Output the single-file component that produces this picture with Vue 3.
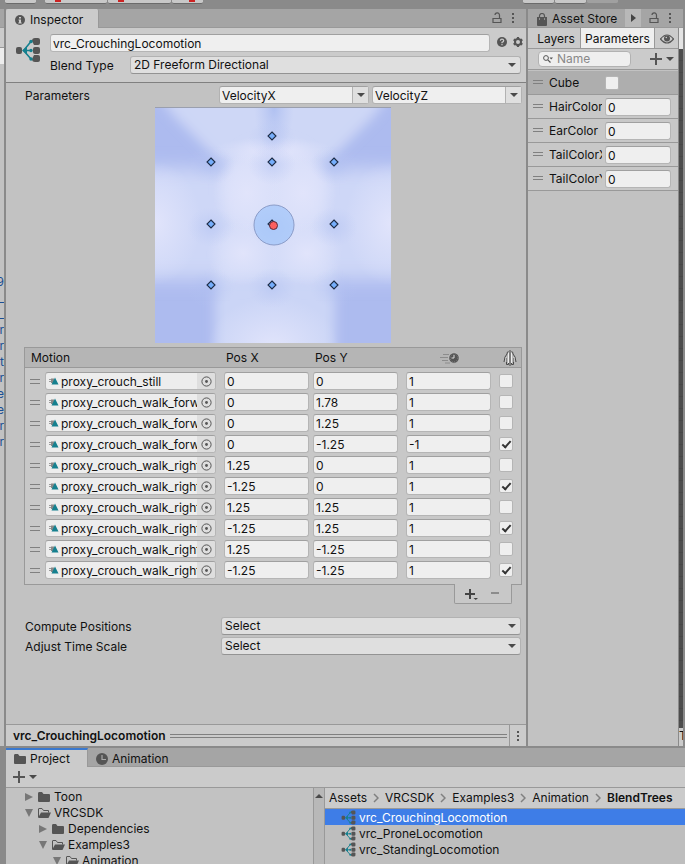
<template>
    <div class="editor">
        <svg class="defs" width="0" height="0" aria-hidden="true">
            <symbol id="blend-tree" viewBox="0 0 26 26">
                <rect x="1" y="10" width="6" height="7" rx="2" fill="#555" />
                <path d="M17 4Q17 1 20 1H23Q25 1 25 3V6Q25 8 23 8H19Z" fill="#555" />
                <rect x="18" y="10" width="7" height="7" rx="2" fill="#555" />
                <path d="M17 22Q17 25 20 25H23Q25 25 25 23V20Q25 18 23 18H19Z" fill="#555" />
                <path d="M8 13.500H17M9 13L16 4.500M9 14L16 22" stroke="#15808f" stroke-width="1.600" fill="none" />
                <path d="M7 13.500L12 9.500V17.500Z" fill="#15808f" />
                <circle cx="16" cy="4.500" r="1.700" fill="#15808f" />
                <circle cx="16" cy="13.500" r="1.700" fill="#15808f" />
                <circle cx="16" cy="22" r="1.700" fill="#15808f" />
            </symbol>
            <symbol id="lock" viewBox="0 0 10 12">
                <path d="M1 6.500H9V10.500H1Z M7.500 6V3.200A2 2 0 0 0 3 3" fill="none" stroke="#555" stroke-width="1.200" />
            </symbol>
            <symbol id="dots" viewBox="0 0 4 12">
                <path d="M1 1h2v2h-2zM1 5h2v2h-2zM1 9h2v2h-2z" fill="#555" />
            </symbol>
            <symbol id="folder" viewBox="0 0 14 12">
                <path d="M1 2.500Q1 1 2 1H5L6.500 3H12Q13 3 13 4V10Q13 11 12 11H2Q1 11 1 10Z" fill="#555" />
            </symbol>
            <symbol id="folder-open" viewBox="0 0 14 12">
                <path d="M1.500 10V2Q1.500 1.500 2 1.500H5L6.500 3.500H11.500V5.500" fill="none" stroke="#555" />
                <path d="M4 5.500H14L11.500 11H1Z" fill="#555" />
            </symbol>
        </svg>

        <div class="toolbar">
            <button v-for="b in toolButtons" :key="b.id" type="button" :class="['tool', b.id]" :aria-label="b.id">
                <i v-if="b.red"></i>
            </button>
        </div>

        <div class="upper">
            <aside class="edge-left">
                <div class="edge-tab"></div>
                <div class="edge-box"></div>
                <div class="edge-field"></div>
                <ul>
                    <li v-for="(t, i) in hierarchyTails" :key="i">{{ t }}</li>
                </ul>
            </aside>

            <section class="inspector">
                <div class="tabbar">
                    <button type="button" class="tab active inspector-tab">
                        <svg width="10" height="10" viewBox="0 0 10 10">
                            <circle cx="5" cy="5" r="5" fill="#555" />
                            <path d="M4 2h2v1.500h-2zM3.500 4.500h2.500v3h.7v1h-3.400v-1h.7v-2h-.5z" fill="#ccc" />
                        </svg>
                        Inspector
                    </button>
                    <span class="spacer"></span>
                    <button type="button" class="icon-btn" aria-label="Lock"><svg width="10" height="12"><use href="#lock" /></svg></button>
                    <button type="button" class="icon-btn menu" aria-label="Menu"><svg width="4" height="12"><use href="#dots" /></svg></button>
                </div>

                <header class="asset-header">
                    <svg class="asset-icon" width="26" height="26"><use href="#blend-tree" /></svg>
                    <div class="asset-fields">
                        <div class="name-row">
                            <input v-model="assetName" class="field" type="text" aria-label="Name">
                            <button type="button" class="icon-btn" aria-label="Help">
                                <svg width="10" height="10" viewBox="0 0 10 10">
                                    <circle cx="5" cy="5" r="5" fill="#555" />
                                    <path d="M3.300 3.800Q3.500 2.200 5 2.200T6.700 3.700Q6.700 4.500 5 5.400V6.200M5 7V8.200" fill="none" stroke="#ccc" stroke-width="1.200" />
                                </svg>
                            </button>
                            <button type="button" class="icon-btn" aria-label="Settings">
                                <svg width="10" height="10" viewBox="0 0 10 10">
                                    <circle cx="5" cy="5" r="3" fill="none" stroke="#555" stroke-width="2" />
                                    <path d="M5 0V2M5 8V10M.7 2.500L2.400 3.500M7.600 6.500L9.300 7.500M.7 7.500L2.400 6.500M7.600 3.500L9.300 2.500" stroke="#555" stroke-width="2.200" />
                                </svg>
                            </button>
                        </div>
                        <div class="type-row">
                            <label for="blend-type">Blend Type</label>
                            <div class="dropdown">
                                <select id="blend-type"><option>2D Freeform Directional</option></select>
                                <span class="caret"></span>
                            </div>
                        </div>
                    </div>
                </header>

                <div class="inspector-body">
                    <div class="param-row">
                        <label for="param-x">Parameters</label>
                        <div v-for="p in axes" :key="p.id" class="combo">
                            <input :id="p.id" v-model="p.value" type="text" :aria-label="p.value">
                            <button type="button" aria-label="Choose parameter"><span class="caret"></span></button>
                        </div>
                    </div>

                    <svg class="blend-graph" width="236" height="236" viewBox="0 0 236 236">
                        <defs>
                            <filter id="wide" x="-40%" y="-40%" width="180%" height="180%"><feGaussianBlur stdDeviation="9" /></filter>
                            <filter id="edge" x="-30%" y="-30%" width="160%" height="160%"><feGaussianBlur stdDeviation="6" /></filter>
                            <radialGradient id="dip">
                                <stop offset="0" stop-color="#aabcf0" stop-opacity=".85" />
                                <stop offset="1" stop-color="#b8c6f3" stop-opacity="0" />
                            </radialGradient>
                            <radialGradient id="glow">
                                <stop offset="0" stop-color="#e1e4fb" />
                                <stop offset="1" stop-color="#dfe3fb" stop-opacity="0" />
                            </radialGradient>
                        </defs>
                        <rect width="236" height="236" fill="#adbbef" />
                        <g filter="url(#edge)">
                            <path d="M-4 -20L20 10L70 60H168L218 10L240 -20Z" fill="#ced7f6" />
                            <path d="M60 120H180V266H60Z" fill="#cbd5f6" />
                        </g>
                        <g filter="url(#wide)">
                            <path d="M-40 60L90 62V172L-40 172Z" fill="#ced7f7" />
                            <path d="M276 60L146 62V172L276 172Z" fill="#ced7f7" />
                        </g>
                        <g filter="url(#edge)">
                            <path d="M70 62H168L174 170H64Z" fill="#d3dbf8" />
                            <ellipse cx="119" cy="82" rx="52" ry="48" fill="#d9dff9" />
                        </g>
                        <ellipse cx="0" cy="116" rx="46" ry="62" fill="url(#glow)" />
                        <ellipse cx="236" cy="116" rx="46" ry="62" fill="url(#glow)" />
                        <ellipse cx="118" cy="240" rx="66" ry="50" fill="url(#glow)" />
                        <ellipse cx="118" cy="44" rx="62" ry="14" fill="url(#glow)" />
                        <ellipse cx="92" cy="86" rx="34" ry="40" fill="url(#glow)" />
                        <ellipse cx="148" cy="86" rx="34" ry="40" fill="url(#glow)" />
                        <ellipse cx="88" cy="146" rx="36" ry="32" fill="url(#glow)" />
                        <ellipse cx="152" cy="146" rx="36" ry="32" fill="url(#glow)" />
                        <ellipse cx="119" cy="0" rx="20" ry="46" fill="url(#dip)" />
                        <ellipse v-for="m in points" :key="'d' + m.x + m.y" :cx="m.x" :cy="m.y + 3" rx="24" ry="20" fill="url(#dip)" opacity=".5" />
                        <circle cx="119" cy="118" r="20" fill="#a3c5f9" fill-opacity=".75" stroke="#8b9cc8" />
                        <path
                            v-for="m in points"
                            :key="'p' + m.x + m.y"
                            :d="`M${m.x} ${m.y - 4}l4 4l-4 4l-4 -4z`"
                            fill="#76aefb" stroke="#1d2b45" stroke-width="1.100"
                        />
                        <circle cx="118.500" cy="118.500" r="4" fill="#fb6060" stroke="#5b2a3a" />
                        <path d="M0 .5H236" stroke="#9a9fae" />
                    </svg>

                    <table class="motions">
                        <colgroup>
                            <col class="c-handle"><col class="c-motion"><col class="c-pos"><col class="c-posy"><col class="c-time"><col class="c-mirror">
                        </colgroup>
                        <thead>
                            <tr>
                                <th colspan="2">Motion</th>
                                <th>Pos X</th>
                                <th>Pos Y</th>
                                <th class="center">
                                    <svg width="20" height="12" viewBox="0 0 20 12" aria-label="Time scale">
                                        <path d="M3 2.500H9M0 5.500H8M2 8.500H8M5 11H10" stroke="#8c8c8c" />
                                        <circle cx="14" cy="6" r="5.200" fill="#555" stroke="#ccc" stroke-width=".6" />
                                        <circle cx="14" cy="6" r="3.800" fill="none" stroke="#888" stroke-width=".8" stroke-dasharray="1 1.400" />
                                        <path d="M14 3V6H11.500" stroke="#ddd" fill="none" />
                                    </svg>
                                </th>
                                <th class="center">
                                    <svg width="14" height="16" viewBox="0 0 14 16" aria-label="Mirror">
                                        <path d="M5.500 1.500Q4 1.500 4 4L2 7L1 12M3.500 8V14.500H5.500V9" fill="none" stroke="#4a4a4a" />
                                        <path d="M8.500 1.500Q10 1.500 10 4L12 7L13 12M10.500 8V14.500H8.500V9" fill="none" stroke="#4a4a4a" />
                                        <path d="M5.500 3V13M8.500 3V13" stroke="#eee" />
                                        <path d="M3 7V12M11 7V12" stroke="#ddd" stroke-width=".8" />
                                        <path d="M7 0V16" stroke="#4a4a4a" />
                                    </svg>
                                </th>
                            </tr>
                        </thead>
                        <tbody>
                            <tr v-for="(m, i) in motions" :key="i">
                                <td><span class="handle"></span></td>
                                <td>
                                    <div class="object-field">
                                        <svg width="10" height="8" viewBox="0 0 10 8">
                                            <path d="M0 2h2v1h-2zM0 4h2v1h-2z" fill="#999" />
                                            <path d="M2 1.500h3v4.500h-3z" fill="#888" />
                                            <path d="M6 .5L9.500 7.500H2.500Z" fill="#15808f" />
                                        </svg>
                                        <input v-model="m.name" type="text" aria-label="Motion">
                                        <button type="button" aria-label="Pick motion">
                                            <svg width="11" height="11" viewBox="0 0 11 11">
                                                <circle cx="5.500" cy="5.500" r="4.600" fill="none" stroke="#555" />
                                                <circle cx="5.500" cy="5.500" r="1.400" fill="#555" />
                                            </svg>
                                        </button>
                                    </div>
                                </td>
                                <td><input v-model="m.x" class="field" type="text" aria-label="Pos X"></td>
                                <td><input v-model="m.y" class="field" type="text" aria-label="Pos Y"></td>
                                <td><input v-model="m.time" class="field" type="text" aria-label="Time scale"></td>
                                <td><input v-model="m.mirror" class="check" type="checkbox" aria-label="Mirror"></td>
                            </tr>
                        </tbody>
                    </table>
                    <div class="list-footer">
                        <button type="button" aria-label="Add motion">
                            <svg width="13" height="12" viewBox="0 0 13 12">
                                <path d="M5 1V11M0 6H10" stroke="#444" stroke-width="2" />
                                <path d="M8.500 10H13L10.800 12Z" fill="#444" />
                            </svg>
                        </button>
                        <button type="button" aria-label="Remove motion">
                            <svg width="8" height="12" viewBox="0 0 8 12"><path d="M0 5H8" stroke="#8c8c8c" stroke-width="2" /></svg>
                        </button>
                    </div>

                    <div v-for="s in selects" :key="s.id" class="select-row">
                        <label :for="s.id">{{ s.label }}</label>
                        <div class="dropdown">
                            <select :id="s.id"><option>Select</option></select>
                            <span class="caret"></span>
                        </div>
                    </div>
                </div>

                <footer class="preview-bar">
                    <strong>{{ assetName }}</strong>
                    <span class="grip"></span>
                    <button type="button" aria-label="Preview menu"><svg width="4" height="12"><use href="#dots" /></svg></button>
                </footer>
            </section>

            <section class="animator">
                <div class="tabbar">
                    <button type="button" class="tab store-tab">
                        <svg width="12" height="13" viewBox="0 0 12 13">
                            <path d="M1 4H11V12Q11 13 10 13H2Q1 13 1 12Z" fill="#555" />
                            <path d="M3.500 5V3A2.500 2.500 0 0 1 8.500 3V5" fill="none" stroke="#555" stroke-width="1.200" />
                            <path d="M3.500 5.500v1M8.500 5.500v1" stroke="#ccc" />
                        </svg>
                        Asset Store
                    </button>
                    <button type="button" class="next-tab" aria-label="Next tab"><span class="tri-right dark"></span></button>
                    <span class="spacer"></span>
                    <button type="button" class="icon-btn" aria-label="Lock"><svg width="10" height="12"><use href="#lock" /></svg></button>
                    <button type="button" class="icon-btn menu" aria-label="Menu"><svg width="4" height="12"><use href="#dots" /></svg></button>
                </div>
                <div class="animator-main">
                    <div class="params">
                        <nav class="subtabs">
                            <button type="button" class="layers">Layers</button>
                            <button type="button" class="current">Parameters</button>
                            <button type="button" class="eye" aria-label="Hide panel">
                                <svg width="14" height="10" viewBox="0 0 14 10">
                                    <path d="M.5 5Q7 -3 13.500 5Q7 13 .5 5Z" fill="none" stroke="#555" stroke-width="1.200" />
                                    <circle cx="7" cy="4.500" r="3" fill="#555" />
                                    <circle cx="6.300" cy="3.500" r=".8" fill="#ccc" />
                                </svg>
                            </button>
                        </nav>
                        <div class="search-row">
                            <label class="search">
                                <svg width="10" height="8" viewBox="0 0 10 8">
                                    <circle cx="3" cy="3" r="2.400" fill="none" stroke="#555" />
                                    <path d="M4.800 4.800L7.500 7.500" stroke="#555" stroke-width="1.200" />
                                    <path d="M6.500 2.500H10L8.200 4.500Z" fill="#555" />
                                </svg>
                                <input type="text" placeholder="Name" aria-label="Search by name">
                            </label>
                            <button type="button" class="add" aria-label="Add parameter">
                                <svg width="12" height="12" viewBox="0 0 12 12"><path d="M6 0V12M0 6H12" stroke="#555" stroke-width="2" /></svg>
                                <span class="caret"></span>
                            </button>
                        </div>
                        <ul class="param-list">
                            <li v-for="(p, i) in params" :key="p.name" :class="{ selected: i === 0 }">
                                <span class="handle"></span>
                                <label :for="'param-' + i">{{ p.name }}</label>
                                <input v-if="p.bool" :id="'param-' + i" class="check" type="checkbox">
                                <input v-else :id="'param-' + i" v-model="p.value" class="field" type="text">
                            </li>
                        </ul>
                    </div>
                    <div class="canvas-edge">
                        <div class="canvas-top"></div>
                        <div class="canvas"></div>
                        <div class="canvas-foot">T</div>
                    </div>
                </div>
            </section>
        </div>

        <section class="project">
            <div class="tabbar">
                <button type="button" class="tab active project-tab">
                    <svg width="14" height="12"><use href="#folder" /></svg>
                    Project
                </button>
                <button type="button" class="tab animation-tab">
                    <svg width="12" height="12" viewBox="0 0 12 12">
                        <circle cx="6" cy="6" r="6" fill="#555" />
                        <path d="M6 2V6.500H10" stroke="#aaa" stroke-width="1.200" fill="none" />
                    </svg>
                    Animation
                </button>
            </div>
            <div class="project-tools">
                <button type="button" class="add" aria-label="Create">
                    <svg width="12" height="12" viewBox="0 0 12 12"><path d="M6 0V12M0 6H12" stroke="#555" stroke-width="2" /></svg>
                    <span class="caret"></span>
                </button>
            </div>
            <div class="project-main">
                <ul class="tree">
                    <li v-for="n in tree" :key="n.name" :class="'depth-' + n.depth">
                        <span class="fold"><i :class="n.open ? 'tri-down' : 'tri-right'"></i></span>
                        <svg width="14" height="12"><use :href="n.open ? '#folder-open' : '#folder'" /></svg>
                        <span>{{ n.name }}</span>
                    </li>
                </ul>
                <div class="scroll"><span class="tri-up"></span></div>
                <div class="assets">
                    <nav class="crumbs">
                        <template v-for="(c, i) in crumbs" :key="c">
                            <svg v-if="i" width="6" height="10" viewBox="0 0 6 10"><path d="M1 1L5 5L1 9" fill="none" stroke="#808080" stroke-width="1.500" /></svg>
                            <a href="#" :class="{ last: i === crumbs.length - 1 }">{{ c }}</a>
                        </template>
                    </nav>
                    <ul class="asset-list">
                        <li v-for="(a, i) in assets" :key="a" :class="{ selected: i === 0 }">
                            <svg width="15" height="15"><use href="#blend-tree" /></svg>
                            <span>{{ a }}</span>
                        </li>
                    </ul>
                </div>
            </div>
        </section>
    </div>
</template>

<script setup>
import { ref } from 'vue';

const assetName = ref('vrc_CrouchingLocomotion');

const toolButtons = [
    { id: 'hand' },
    { id: 'pivot', red: true },
    { id: 'local', red: true },
    { id: 'snap', red: true },
    { id: 'play' },
    { id: 'pause' },
    { id: 'step' }
];

const hierarchyTails = ['9', '_', '_', 'r', 'r', 't', 'r', 'e', 'e', 'r', 'r'];

const axes = ref([
    { id: 'param-x', value: 'VelocityX' },
    { id: 'param-z', value: 'VelocityZ' }
]);

// Motion positions on the blend graph
const points = [
    { x: 117, y: 29 },
    { x: 56, y: 55 },
    { x: 117, y: 55 },
    { x: 179, y: 55 },
    { x: 56, y: 117 },
    { x: 117, y: 117 },
    { x: 179, y: 117 },
    { x: 56, y: 178 },
    { x: 117, y: 178 },
    { x: 179, y: 178 }
];

const motions = ref([
    { name: 'proxy_crouch_still', x: '0', y: '0', time: '1', mirror: false },
    { name: 'proxy_crouch_walk_forw', x: '0', y: '1.78', time: '1', mirror: false },
    { name: 'proxy_crouch_walk_forw', x: '0', y: '1.25', time: '1', mirror: false },
    { name: 'proxy_crouch_walk_forw', x: '0', y: '-1.25', time: '-1', mirror: true },
    { name: 'proxy_crouch_walk_right', x: '1.25', y: '0', time: '1', mirror: false },
    { name: 'proxy_crouch_walk_right', x: '-1.25', y: '0', time: '1', mirror: true },
    { name: 'proxy_crouch_walk_right', x: '1.25', y: '1.25', time: '1', mirror: false },
    { name: 'proxy_crouch_walk_right', x: '-1.25', y: '1.25', time: '1', mirror: true },
    { name: 'proxy_crouch_walk_right', x: '1.25', y: '-1.25', time: '1', mirror: false },
    { name: 'proxy_crouch_walk_right', x: '-1.25', y: '-1.25', time: '1', mirror: true }
]);

const selects = [
    { id: 'compute', label: 'Compute Positions' },
    { id: 'adjust', label: 'Adjust Time Scale' }
];

const params = ref([
    { name: 'Cube', bool: true },
    { name: 'HairColor', value: '0' },
    { name: 'EarColor', value: '0' },
    { name: 'TailColorX', value: '0' },
    { name: 'TailColorY', value: '0' }
]);

const tree = [
    { name: 'Toon', depth: 1, open: false },
    { name: 'VRCSDK', depth: 1, open: true },
    { name: 'Dependencies', depth: 2, open: false },
    { name: 'Examples3', depth: 2, open: true },
    { name: 'Animation', depth: 3, open: true }
];

const crumbs = ['Assets', 'VRCSDK', 'Examples3', 'Animation', 'BlendTrees'];
const assets = ['vrc_CrouchingLocomotion', 'vrc_ProneLocomotion', 'vrc_StandingLocomotion'];
</script>

<style>
body { background: #c2c2c2; overflow: hidden; }
</style>

<style scoped>
.editor {
    height: 100vh; display: flex; flex-direction: column; overflow: hidden;
    background: #8a8a8a; color: #111;
    font-family: Inter, "Liberation Sans", sans-serif; font-size: 12px; line-height: 16px;
}
.editor * { box-sizing: border-box; }
.defs { position: absolute; }
svg { display: block; flex: none; }
ul { list-style: none; margin: 0; padding: 0; }
button, input, select { font: inherit; color: inherit; margin: 0; padding: 0; border: 0; border-radius: 0; background: none; }
input, select { min-width: 0; outline: none; }
.spacer { flex: 1; }

/* Top toolbar */
.toolbar { height: 9px; flex: none; display: flex; align-items: flex-start; }
.tool { height: 4px; width: 31px; background: #c8c8c8; border-bottom: 1px solid #6b6b6b; margin-right: 1px; border-radius: 0 0 2px 2px; display: flex; align-items: flex-start; }
.tool i { width: 6px; height: 2px; margin-left: 10px; background: #c22; }
.hand { margin-left: 5px; margin-right: 9px; }
.pivot { width: 62px; }
.local { width: 63px; }
.snap { margin-right: auto; }
.snap i { margin-left: 17px; }
.step { margin-right: 67px; background: #a0a0a0; border-color: #8a8a8a; }

.upper { flex: none; display: flex; gap: 2px; height: 737px; }

/* Window edge on the left */
.edge-left { width: 4px; flex: none; background: #c2c2c2; overflow: hidden; }
.edge-tab { height: 19px; background: #a5a5a5; border-bottom: 1px solid #999; }
.edge-box { height: 20px; background: #cbcbcb; border-bottom: 1px solid #999; }
.edge-field { height: 16px; background: #ededed; }
.edge-left ul { padding-top: 210px; color: #1a4f94; }
.edge-left li { height: 16px; display: flex; justify-content: flex-end; }

/* Tabs */
.tabbar { height: 19px; flex: none; display: flex; align-items: center; background: #a5a5a5; border-bottom: 1px solid #999; }
.tab { height: 18px; display: flex; align-items: center; gap: 5px; white-space: nowrap; }
.tab.active { background: #cbcbcb; height: 19px; align-self: flex-start; border-right: 1px solid #999; }
.inspector-tab { width: 93px; padding: 2px 0 0 9px; border-radius: 2px 2px 0 0; }
.icon-btn { display: flex; align-items: center; justify-content: center; width: 16px; height: 18px; }
.tabbar .menu { margin-right: 5px; }

/* Inspector */
.inspector { flex: 1; min-width: 0; display: flex; flex-direction: column; background: #c2c2c2; }
.asset-header { flex: none; display: flex; gap: 8px; height: 55px; padding: 6px 0 0 9px; background: #cbcbcb; border-bottom: 1px solid #808080; }
.asset-icon { margin-top: 3px; }
.asset-fields { flex: 1; min-width: 0; display: flex; flex-direction: column; gap: 4px; padding-left: 1px; }
.name-row { display: flex; align-items: center; }
.name-row .field { flex: 1; margin-right: 4px; }
.name-row .icon-btn { height: 18px; padding-bottom: 3px; }
.type-row { display: flex; align-items: center; padding-right: 5px; }
.type-row label { width: 80px; padding-top: 1px; }
.field {
    display: block; width: 100%; height: 18px; padding: 1px 2px 0;
    background: #efefef; border: 1px solid #b5b5b5; border-top-color: #a0a0a0; border-radius: 3px;
}
.dropdown { flex: 1; position: relative; display: flex; }
.dropdown select {
    appearance: none; flex: 1; height: 18px; padding: 0 3px;
    background: #dfdfdf; border: 1px solid #b2b2b2; border-bottom-color: #939393; border-radius: 3px;
}
.dropdown .caret { position: absolute; right: 5px; top: 7px; }
.caret { border: 4px solid transparent; border-top-color: #4a4a4a; border-bottom-width: 0; }

.inspector-body { flex: 1; padding: 3px 4px 0 18px; }
.param-row { display: flex; gap: 3px; height: 21px; }
.param-row label { width: 192px; line-height: 20px; padding-left: 1px; }
.combo { flex: 1; min-width: 0; height: 18px; display: flex; border: 1px solid #b2b2b2; border-top-color: #a0a0a0; border-radius: 3px; background: #efefef; }
.combo input { flex: 1; padding: 1px 0 0 2px; }
.combo button { width: 16px; display: flex; align-items: center; justify-content: center; background: #dfdfdf; border-left: 1px solid #b2b2b2; }
.blend-graph { margin: 0 auto; }

.motions {
    width: 100%; margin-top: 4px; table-layout: fixed; border-collapse: separate; border-spacing: 0;
    background: #c8c8c8; border: 1px solid #999; border-bottom: 0;
}
.c-handle { width: 20px; }
.c-pos { width: 89px; }
.c-posy { width: 93px; }
.c-time { width: 93px; }
.c-mirror { width: 22px; }
th { height: 20px; padding: 0; text-align: left; font-weight: normal; background: #b5b5b5; border-bottom: 1px solid #999; }
th:first-child { padding-left: 6px; }
th:nth-child(2), th:nth-child(3) { padding-left: 2px; }
th.center { padding-right: 6px; }
th.center svg { margin: 0 auto; }
th.center:last-child { padding: 0; }
td { padding: 0 0 3px; height: 21px; }
tbody tr:first-child td { padding-top: 4px; height: 25px; }
tbody tr:last-child td { padding-bottom: 5px; border-bottom: 1px solid #999; }
td:nth-child(2) { padding-right: 8px; }
td:nth-child(3) { padding-right: 4px; }
td:nth-child(4), td:nth-child(5) { padding-right: 8px; }
.handle { display: block; width: 10px; height: 4px; border: solid #808080; border-width: 1px 0; }
td .handle { height: 5px; margin-left: 5px; }
.object-field { display: flex; align-items: center; height: 18px; padding-left: 3px; gap: 2px; background: #ededed; border: 1px solid #b5b5b5; border-top-color: #a0a0a0; border-radius: 3px; overflow: hidden; }
.object-field input { flex: 1; padding-top: 1px; }
.object-field button { display: flex; align-items: center; justify-content: center; width: 18px; height: 16px; margin-left: -2px; background: #dedede; }
.check {
    appearance: none; display: grid; place-items: center; width: 14px; height: 14px;
    background: #efefef; border: 1px solid #b5b5b5; border-radius: 2px;
}
.check:checked::after { content: ""; box-sizing: border-box; width: 5px; height: 9px; border: solid #333; border-width: 0 2px 2px 0; transform: translateY(-1px) rotate(42deg); }

.list-footer {
    width: 58px; height: 20px; margin: -1px 10px 13px auto; position: relative;
    display: flex; align-items: center; justify-content: space-between; padding: 0 12px 0 10px;
    background: #c8c8c8; border: 1px solid #999; border-top: 0; border-radius: 0 0 2px 2px;
}
.select-row { display: flex; height: 20px; padding: 0 1px 0 1px; }
.select-row label { width: 196px; line-height: 20px; }

.preview-bar { flex: none; height: 22px; display: flex; align-items: center; padding-left: 7px; gap: 4px; background: #cbcbcb; border-top: 1px solid #999; }
.preview-bar strong { font-weight: 600; }
.grip { flex: 1; height: 4px; border: solid #808080; border-width: 1px 0; margin-right: -2px; }
.preview-bar button { width: 17px; height: 21px; display: flex; align-items: center; justify-content: center; border-left: 1px solid #999; }

/* Animator parameters */
.animator { flex: none; width: 155px; margin-right: 2px; display: flex; flex-direction: column; }
.store-tab { padding: 2px 0 0 8px; width: 97px; gap: 4px; }
.next-tab { width: 16px; height: 18px; display: flex; align-items: center; justify-content: center; background: #b8b8b8; }
.animator-main { flex: 1; display: flex; gap: 1px; }
.params { flex: 1; min-width: 0; background: #c2c2c2; }
.subtabs { display: flex; height: 21px; padding-left: 4px; background: #cbcbcb; border-bottom: 1px solid #999; }
.subtabs button { height: 20px; padding-top: 1px; text-align: center; border-right: 1px solid #999; }
.layers { width: 49px; }
.current { width: 74px; background: #efefef; }
.subtabs .eye { flex: 1; display: flex; align-items: center; justify-content: center; border: 0; }
.search-row { display: flex; align-items: center; height: 21px; padding: 0 4px 0 10px; background: #cbcbcb; border-bottom: 1px solid #999; }
.search { display: flex; align-items: center; gap: 4px; width: 93px; height: 16px; padding-left: 4px; background: #efefef; border: 1px solid #b2b2b2; border-radius: 4px; }
.search input { flex: 1; line-height: 14px; }
.search input::placeholder { color: #888; opacity: 1; }
.add { display: flex; align-items: center; gap: 4px; }
.search-row .add { margin-left: auto; }
.param-list { padding-top: 1px; }
.param-list li { display: flex; align-items: center; height: 24px; padding: 0 7px 0 5px; background: #c8c8c8; border-bottom: 1px solid #999; }
.param-list .selected { background: #aeaeae; }
.param-list .handle { margin: 0 6px 2px 0; }
.param-list label { width: 53px; margin-right: 3px; overflow: hidden; white-space: nowrap; }
.param-list .field { flex: 1; width: auto; }
.canvas-edge { width: 4px; display: flex; flex-direction: column; overflow: hidden; }
.canvas-top { height: 21px; background: #e4e4e4; }
.canvas { flex: 1; background: repeating-linear-gradient(#4d4d4d 0 11px, #474747 11px 12px); }
.canvas-foot { height: 18px; background: #cbcbcb; }

/* Project */
.project { flex: 1; margin: 2px 0 0 6px; min-height: 116px; display: flex; flex-direction: column; background: #c2c2c2; }
.project-tab { width: 82px; padding: 1px 0 0 7px; border-top: 2px solid #3a79d0; gap: 3px; }
.animation-tab { height: 19px; padding: 3px 0 0 8px; gap: 4px; }
.project-tools { flex: none; height: 21px; padding: 0 7px; display: flex; align-items: center; background: #cbcbcb; border-bottom: 1px solid #999; }
.project-main { flex: 1; display: flex; min-height: 0; overflow: hidden; }
.tree { width: 307px; padding-top: 1px; }
.tree li { display: flex; align-items: center; height: 16px; gap: 3px; }
.depth-1 { padding-left: 17px; }
.depth-2 { padding-left: 31px; }
.depth-3 { padding-left: 45px; }
.fold { width: 11px; display: flex; justify-content: center; }
.tri-right { border: 4px solid transparent; border-left: 8px solid #777; border-right-width: 0; }
.tri-right.dark { border-left: 5px solid #444; }
.tri-down { border: 4px solid transparent; border-top: 8px solid #777; border-bottom-width: 0; }
.tri-up { border: 4px solid transparent; border-bottom-color: #4a4a4a; border-top-width: 0; }
.scroll { width: 12px; padding-top: 6px; display: flex; justify-content: center; align-items: flex-start; background: #b8b8b8; border: solid #999; border-width: 0 1px; }
.assets { flex: 1; min-width: 0; background: #bebebe; }
.crumbs { display: flex; align-items: center; gap: 6px; height: 21px; padding-left: 4px; background: #cbcbcb; border-bottom: 1px solid #999; white-space: nowrap; }
.crumbs a { color: inherit; text-decoration: none; }
.crumbs .last { font-weight: 600; }
.asset-list li { display: flex; align-items: center; gap: 3px; height: 16px; padding-left: 16px; }
.asset-list span { padding-top: 2px; }
.asset-list .selected { background: #3e7de7; color: #fff; }
</style>
